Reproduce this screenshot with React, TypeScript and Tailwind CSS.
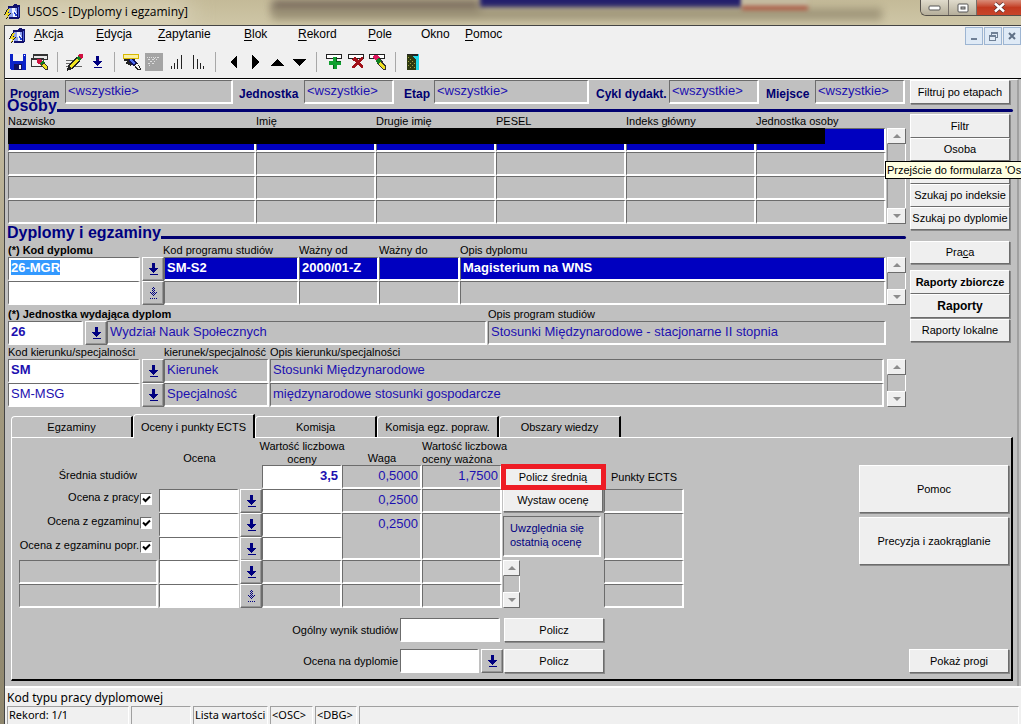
import React, { useEffect, useRef } from "react";

/* ---------- basic controls ---------- */

const sunken = "border-t border-l border-t-[#6c6c6c] border-l-[#6c6c6c] border-r-2 border-b-2 border-r-white border-b-white";
const raised = "border border-t-white border-l-white border-r-[#6c6c6c] border-b-[#6c6c6c]";

type FieldProps = {
  label: string;
  value?: string;
  className?: string;
  tone?: "grey" | "white" | "active";
  bold?: boolean;
  right?: boolean;
  id?: string;
};

function Field({ label, value = "", className = "", tone = "grey", bold, right, id }: FieldProps) {
  const tones = {
    grey: "bg-[#c0c0c0] text-[#1c10b0]",
    white: "bg-white text-[#1c10b0]",
    active: "bg-[#0000c0] text-white",
  };
  return (
    <input
      id={id}
      aria-label={id ? undefined : label}
      defaultValue={value}
      readOnly={tone !== "white"}
      className={`block h-6 min-w-0 rounded-none px-0.5 pb-0.5 text-[13px] outline-none ${sunken} ${tones[tone]} ${bold ? "font-bold" : ""} ${right ? "text-right" : ""} ${className}`}
    />
  );
}

function Btn({ children, className = "" }: { children: React.ReactNode; className?: string }) {
  return (
    <button className={`shrink-0 bg-[#efefef] text-center whitespace-nowrap shadow-[1px_1px_0_#8a8a8a] ${raised} ${className}`}>
      {children}
    </button>
  );
}

function Lov({ disabled, label }: { disabled?: boolean; label: string }) {
  return (
    <button
      aria-label={label}
      className="flex h-6 w-[22px] shrink-0 items-center justify-center border border-t-white border-l-white border-r-[#6c6c6c] border-b-[#6c6c6c] bg-[#c0c0c0] shadow-[inset_-1px_-1px_0_#969696]"
    >
      <svg width="9" height="13" viewBox="0 0 9 13" shapeRendering="crispEdges">
        <defs>
          <pattern id="dither" width="2" height="2" patternUnits="userSpaceOnUse">
            <rect width="1" height="1" fill="#000080" />
            <rect x="1" y="1" width="1" height="1" fill="#000080" />
          </pattern>
        </defs>
        <path d="M3 0h3v5h3v1h-1v1h-1v1h-1v1h-1v1h-1v-1h-1v-1h-1v-1h-1v-1h-1v-1h3zM1 11h8v1h-8z" fill={disabled ? "url(#dither)" : "#000080"} />
      </svg>
    </button>
  );
}

function Scroll({ className = "" }: { className?: string }) {
  const cap = "flex h-4 items-center justify-center bg-[#efefef] border border-t-white border-l-white border-r-[#6c6c6c] border-b-[#6c6c6c]";
  return (
    <div className={`flex shrink-0 flex-col ${className}`}>
      <button aria-label="W górę" className={cap}>
        <svg width="8" height="4" viewBox="0 0 8 4"><path d="M4 0l4 4H0z" fill="#8c8c8c" /></svg>
      </button>
      <div className="flex-1 border-x border-l-[#8a8a8a] border-r-white" />
      <button aria-label="W dół" className={cap}>
        <svg width="8" height="4" viewBox="0 0 8 4"><path d="M0 0h8l-4 4z" fill="#8c8c8c" /></svg>
      </button>
    </div>
  );
}

function Heading({ children, className = "" }: { children: string; className?: string }) {
  return (
    <div className={`flex items-end ${className}`}>
      <h2 className="text-[16px] leading-4 font-bold text-[#000080]">{children}</h2>
      <div className="mb-0.5 h-[3px] flex-1 rounded-r-full bg-[#000070]" />
    </div>
  );
}

/* ---------- icons ---------- */

function AppIcon() {
  return (
    <svg width="17" height="16" viewBox="0 0 17 16" shapeRendering="crispEdges">
      <path d="M4 2h4l2-2h3v1h3v13l-2 1H5z" fill="#10106c" />
      <path d="M5 4h8v9H5z" fill="#8fa4f0" />
      <path d="M8 4h3v3h1v2h1v4H9V9H8z" fill="#f0f4ff" />
      <path d="M10 8h1v1h1v1h1v2h-2v-2h-1z" fill="#2040d0" />
      <path d="M14 3h1v10h-1z" fill="#4a60d8" />
      <path d="M3 5h3L4 9h3l-5 7 1-5H0z" fill="#f0d820" />
      <path d="M3 5h1L1 11H0zM6 9h1l-5 7v-1z" fill="#202020" />
    </svg>
  );
}

function Icon({ w, h, children }: { w: number; h: number; children: React.ReactNode }) {
  return (
    <svg width={w} height={h} viewBox={`0 0 ${w} ${h}`} shapeRendering="crispEdges">
      {children}
    </svg>
  );
}

const tools: (null | [string, React.ReactNode])[] = [
  ["Zapisz", (
    <Icon w={16} h={16}>
      <path d="M0 0h15l1 1v15H1l-1-1z" fill="#0a22c8" />
      <path d="M3 0h10v7H3z" fill="#f4f4f4" />
      <path d="M4 10h8v6H4z" fill="#101060" />
      <path d="M9 11h2v4H9z" fill="#f4f4f4" />
      <path d="M14 1h1v1h-1z" fill="#fff" />
    </Icon>
  )],
  ["Wyczyść", (
    <Icon w={18} h={16}>
      <path d="M2 0h15v6H2z" fill="#333" />
      <path d="M3 2h13v3H3z" fill="#e8e8e8" />
      <path d="M0 4h13v9H0z" fill="#333" />
      <path d="M1 6h11v6H1z" fill="#f4f4f4" />
      <path d="M6 5h4l2 3-2 3-3-1-1-2z" fill="#d01040" />
      <path d="M10 8l2-1 2 2-3 3-2-2z" fill="#108020" />
      <path d="M13 8l4 5v3h-3l-4-5z" fill="#333" />
      <path d="M13 9l3 4v2h-2l-3-4z" fill="#f0e020" />
    </Icon>
  )],
  null,
  ["Edytuj", (
    <Icon w={18} h={17}>
      <path d="M0 6h8v1H0zM0 9h6v1H0zM0 12h16v1H0z" fill="#666" />
      <path d="M2 11l8-8 4 4-8 8-5 2z" fill="#222" />
      <path d="M4 11l7-7 2 2-8 8z" fill="#f4e820" />
      <path d="M10 4l2-2 3 3-2 2z" fill="#108020" />
      <path d="M12 1l2-1h2l1 1v2l-2 2-3-3z" fill="#d01040" />
    </Icon>
  )],
  ["Lista", (
    <Icon w={9} h={12}>
      <path d="M3 0h3v5h3v1h-1v1h-1v1h-1v1h-1v1h-1v-1h-1v-1h-1v-1h-1v-1h-1v-1h3zM1 11h8v1h-8z" fill="#000080" />
    </Icon>
  )],
  null,
  ["Wprowadź zapytanie", (
    <Icon w={18} h={16}>
      <path d="M0 0h16v5H0z" fill="#d8b800" />
      <path d="M1 1h14v3H1z" fill="#faf0a0" />
      <path d="M1 5h11v2H9l-3 2 3 1-1 2-6-3 3-2H1z" fill="#222" />
      <path d="M6 5h4l4 4-3 4-5-5z" fill="#101060" />
      <path d="M7 5h2l3 4-1 2-4-4z" fill="#5070f0" />
      <path d="M11 11l3-3 4 7-1 1h-3z" fill="#222" />
      <path d="M12 11l2-2 3 6h-2z" fill="#f4f4f4" />
    </Icon>
  )],
  ["Anuluj zapytanie", (
    <Icon w={18} h={18}>
      <path d="M0 0h18v18H0z" fill="#a4a4a4" />
      <path d="M2 4h1v1H2zM4 4h1v1H4zM6 4h1v1H6zM8 4h1v1H8zM10 4h1v1h-1zM12 4h2v1h-2zM3 6h2v1H3zM5 8h2v1H5zM7 6h2v1H7zM9 5h1v1H9zM9 8h1v1H9zM7 10h2v1H7zM11 6h1v1h-1zM3 10h2v1H3zM4 12h1v1H4z" fill="#e0e0e0" />
    </Icon>
  )],
  ["Sortuj rosnąco", (
    <Icon w={11} h={14}>
      <path d="M0 11h1v3H0zM3 8h1v6H3zM6 4h1v10H6zM10 0h1v14h-1z" fill="#222" />
    </Icon>
  )],
  ["Sortuj malejąco", (
    <Icon w={11} h={14}>
      <path d="M0 0h1v14H0zM4 4h1v10H4zM7 8h1v6H7zM10 11h1v3h-1z" fill="#222" />
    </Icon>
  )],
  null,
  ["Poprzedni", <Icon w={7} h={14}><path d="M7 0v14L0 7z" fill="#000" /></Icon>],
  ["Następny", <Icon w={7} h={14}><path d="M0 0v14l7-7z" fill="#000" /></Icon>],
  ["W górę", <Icon w={14} h={7}><path d="M7 0l7 7H0z" fill="#000" /></Icon>],
  ["W dół", <Icon w={14} h={7}><path d="M0 0h14L7 7z" fill="#000" /></Icon>],
  null,
  ["Wstaw rekord", (
    <Icon w={17} h={16}>
      <path d="M0 0h16v5H0z" fill="#222" />
      <path d="M1 1h14v3H1z" fill="#fff" />
      <path d="M7 3h4v4h4v4h-4v4H7v-4H3V7h4z" fill="#10a030" />
      <path d="M10 3h1v4h4v1h-5zM7 11h1v4H7z" fill="#086018" />
    </Icon>
  )],
  ["Usuń rekord", (
    <Icon w={17} h={16}>
      <path d="M0 0h16v5H0z" fill="#222" />
      <path d="M1 1h14v3H1z" fill="#fff" />
      <path d="M4 5l2-2h1l3 3 3-3h2v2l-3 3 3 4v2h-2l-3-3-4 3H4v-2l4-4-4-2z" fill="#a01018" />
    </Icon>
  )],
  ["Wyczyść rekord", (
    <Icon w={18} h={16}>
      <path d="M0 0h16v5H0z" fill="#222" />
      <path d="M1 1h14v3H1z" fill="#fff" />
      <path d="M10 5h2l5 7v4h-3L8 9z" fill="#333" />
      <path d="M11 7l5 6v2h-2l-5-6z" fill="#f0e020" />
      <path d="M5 1h4l2 3-4 3-3-3z" fill="#e01860" />
      <path d="M10 4l2 3-3 3-3-3z" fill="#108020" />
    </Icon>
  )],
  null,
  ["Wyjście", (
    <Icon w={12} h={16}>
      <path d="M0 0h12v16H0z" fill="#20d8e8" />
      <path d="M0 0h11v2H0z" fill="#222" />
      <path d="M0 1h4l5 4v11H0z" fill="#2f3a10" />
      <path d="M1 3h1v1H1zM3 5h1v1H3zM5 7h1v1H5zM1 7h1v1H1zM3 9h1v1H3zM5 11h1v1H5zM1 11h1v1H1zM3 13h1v1H3zM7 9h1v1H7zM7 13h1v1H7z" fill="#a0a040" />
    </Icon>
  )],
];

/* ---------- window chrome ---------- */

function TitleBar() {
  return (
    <header className="relative flex h-[25px] items-start overflow-hidden bg-linear-to-b from-[#c4ba98] to-[#cec6a6]">
      <div className="absolute inset-y-0 left-0 w-[190px] bg-[#e6e0cc] opacity-60 blur-md" />
      <div className="absolute top-0 left-[272px] h-3 w-[208px] bg-[#77695c] blur-xs" />
      <div className="absolute -top-2 left-[480px] h-4 w-[262px] bg-[#201c6c] blur-[2px]" />
      <div className="absolute top-2 left-[272px] h-3 w-[610px] bg-[#958b70] opacity-80 blur-xs" />
      <div className="absolute -top-2 left-[742px] h-[18px] w-[66px] border-b-4 border-[#a8503c] bg-[#c4baa0] blur-[2px]" />
      <div className="relative flex h-full items-center gap-1.5 pb-0.5 pl-1">
        <AppIcon />
        <h1 className="font-['Open_Sans',sans-serif] text-[12px] text-black">USOS - [Dyplomy i egzaminy]</h1>
      </div>
      <div className="relative ml-auto flex h-4 overflow-hidden rounded-bl-md border border-t-0 border-r-0 border-[#55504a]">
        <button aria-label="Minimalizuj" className="flex w-7 items-center justify-center border-r border-[#77706a] bg-linear-to-b from-[#e0dbcc] to-[#b5ae9a]">
          <svg width="13" height="6" viewBox="0 0 13 6"><rect x="1" y="1" width="11" height="4" rx="1" fill="#fff" stroke="#555" /></svg>
        </button>
        <button aria-label="Maksymalizuj" className="flex w-7 items-center justify-center border-r border-[#77706a] bg-linear-to-b from-[#e0dbcc] to-[#b5ae9a]">
          <svg width="12" height="10" viewBox="0 0 12 10"><rect x="1" y="1" width="10" height="8" rx="1" fill="#fff" stroke="#555" /><rect x="4" y="4" width="4" height="2" fill="#bbb" stroke="#555" /></svg>
        </button>
        <button aria-label="Zamknij" className="flex w-11 items-center justify-center bg-linear-to-b from-[#d98c78] via-[#c23a20] to-[#c8452a]">
          <svg width="13" height="11" viewBox="0 0 13 11"><path d="M2 1.500l9 8M11 1.500l-9 8" stroke="#5a3030" strokeWidth="4" /><path d="M2 1.500l9 8M11 1.500l-9 8" stroke="#fff" strokeWidth="2.500" /></svg>
        </button>
      </div>
    </header>
  );
}

const menu: [string, string, string][] = [
  ["A", "kcja", "w-[62px]"],
  ["E", "dycja", "w-[62px]"],
  ["Z", "apytanie", "w-[86px]"],
  ["B", "lok", "w-[54px]"],
  ["R", "ekord", "w-[70px]"],
  ["P", "ole", "w-[53px]"],
  ["", "Okno", "w-11"],
  ["P", "omoc", "w-14"],
];

function MenuBar() {
  const mdi = "flex h-[18px] w-[18px] items-center justify-center border border-[#9db5d2] bg-[#dfeaf6]";
  return (
    <nav className="flex h-[21px] items-start bg-[#f0f0f0] pl-1">
      <div className="w-[25px] pt-0.5"><AppIcon /></div>
      {menu.map(([key, rest, w]) => (
        <button key={key + rest} className={`${w} shrink-0 text-left text-[12px] leading-4`}>
          <span className="underline underline-offset-2">{key}</span>{rest}
        </button>
      ))}
      <div className="ml-auto flex gap-px pt-px">
        <button aria-label="Minimalizuj okno" className={mdi}><Icon w={8} h={8}><path d="M1 6h6v2H1z" fill="#6f8096" /></Icon></button>
        <button aria-label="Przywróć okno" className={mdi}><Icon w={9} h={9}><path d="M2 0h7v6H7V5h1V2H3v1H2zM0 3h7v6H0zM1 5v3h5V5z" fill="#6f8096" fillRule="evenodd" /></Icon></button>
        <button aria-label="Zamknij okno" className={mdi}><svg width="8" height="8" viewBox="0 0 8 8"><path d="M1 1l6 6M7 1L1 7" stroke="#5f7086" strokeWidth="2" /></svg></button>
      </div>
    </nav>
  );
}

function ToolBar() {
  return (
    <div role="toolbar" className="flex h-8 items-center border-b border-black bg-[#f0f0f0] pb-px pl-0.5">
      {tools.map((t, i) =>
        t ? (
          <button key={i} aria-label={t[0]} className="flex h-6 w-[22px] shrink-0 items-center justify-center">{t[1]}</button>
        ) : (
          <div key={i} className="mx-1.5 h-5 w-px bg-[#a8a8a8]" />
        ),
      )}
    </div>
  );
}

/* ---------- sections ---------- */

function FilterRow() {
  const item = "flex items-center";
  const lab = "pt-1 text-[12px] leading-4 font-bold text-[#000070] whitespace-nowrap";
  const all = "<wszystkie>";
  return (
    <div className="flex h-6 items-center pl-[5px]">
      <div className={item}><label htmlFor="prog" className={`w-[55px] ${lab}`}>Program</label><Field id="prog" label="Program" value={all} className="w-[168px]" /></div>
      <div className={`ml-1.5 ${item}`}><label htmlFor="jedn" className={`w-[65px] ${lab}`}>Jednostka</label><Field id="jedn" label="Jednostka" value={all} className="w-[90px]" /></div>
      <div className={`ml-2.5 ${item}`}><label htmlFor="etap" className={`w-[30px] ${lab}`}>Etap</label><Field id="etap" label="Etap" value={all} className="w-[155px]" /></div>
      <div className={`ml-[7px] ${item}`}><label htmlFor="cykl" className={`w-[73px] ${lab}`}>Cykl dydakt.</label><Field id="cykl" label="Cykl" value={all} className="w-[90px]" /></div>
      <div className={`ml-[7px] ${item}`}><label htmlFor="miej" className={`w-[49px] ${lab}`}>Miejsce</label><Field id="miej" label="Miejsce" value={all} className="w-[90px]" /></div>
      <Btn className="mr-[7px] ml-auto h-6 w-[100px]">Filtruj po etapach</Btn>
    </div>
  );
}

function People() {
  const heads = ["Nazwisko", "Imię", "Drugie imię", "PESEL", "Indeks główny", "Jednostka osoby"];
  return (
    <div className="flex items-end">
      <div className="relative flex-1">
        <table className="w-full table-fixed border-separate border-spacing-0">
          <colgroup>
            <col className="w-[248px]" /><col className="w-[120px]" /><col className="w-[120px]" />
            <col className="w-[130px]" /><col className="w-[130px]" /><col />
          </colgroup>
          <thead>
            <tr>{heads.map((h) => <th key={h} className="p-0 text-left leading-[14px] font-normal">{h}</th>)}</tr>
          </thead>
          <tbody>
            {[0, 1, 2, 3].map((r) => (
              <tr key={r}>
                {heads.map((h) => <td key={h} className={`h-6 p-0 ${sunken} ${r === 0 ? "bg-[#0000c0]" : ""}`} />)}
              </tr>
            ))}
          </tbody>
        </table>
        <div className="absolute top-3.5 left-0 h-4 w-[93%] bg-black" />
      </div>
      <Scroll className="ml-px h-24 w-[19px]" />
    </div>
  );
}

function Diplomas() {
  const code = useRef<HTMLInputElement>(null);
  useEffect(() => {
    code.current?.focus();
    code.current?.select();
  }, []);
  const lab = "leading-[14px] whitespace-nowrap";
  return (
    <>
      <div className="mt-0.5 flex">
        <label htmlFor="kod" className={`w-[155px] font-bold ${lab}`}>(*) Kod dyplomu</label>
        <span className={`w-[136px] ${lab}`}>Kod programu studiów</span>
        <span className={`w-20 ${lab}`}>Ważny od</span>
        <span className={`w-[81px] ${lab}`}>Ważny do</span>
        <span className={lab}>Opis dyplomu</span>
      </div>
      <div className="flex">
        <div className="flex-1">
          <div className="flex">
            <input
              id="kod"
              ref={code}
              defaultValue="26-MGR"
              className={`mr-0.5 block h-6 w-[132px] rounded-none bg-white px-0.5 pb-0.5 text-[13px] font-bold text-[#1c10b0] outline-none selection:bg-[#3399ff] selection:text-white ${sunken}`}
            />
            <Lov label="Lista kodów dyplomu" />
            <Field label="Kod programu studiów" tone="active" bold value="SM-S2" className="w-[135px]" />
            <Field label="Ważny od" tone="active" bold value="2000/01-Z" className="w-20" />
            <Field label="Ważny do" tone="active" className="w-[81px]" />
            <Field label="Opis dyplomu" tone="active" bold value="Magisterium na WNS" className="flex-1" />
          </div>
          <div className="flex">
            <Field label="Kod dyplomu 2" tone="white" className="mr-0.5 w-[132px]" />
            <Lov disabled label="Lista kodów dyplomu 2" />
            <Field label="Kod programu 2" className="w-[135px]" />
            <Field label="Ważny od 2" className="w-20" />
            <Field label="Ważny do 2" className="w-[81px]" />
            <Field label="Opis dyplomu 2" className="flex-1" />
          </div>
        </div>
        <Scroll className="ml-px h-12 w-[19px]" />
      </div>

      <div className="mt-0.5 flex">
        <label htmlFor="jw" className={`w-[480px] font-bold ${lab}`}>(*) Jednostka wydająca dyplom</label>
        <label htmlFor="ops" className={lab}>Opis program studiów</label>
      </div>
      <div className="mr-5 flex">
        <Field id="jw" label="Jednostka" tone="white" bold value="26" className="mr-0.5 w-[75px]" />
        <Lov label="Lista jednostek" />
        <Field label="Nazwa jednostki" value="Wydział Nauk Społecznych" className="mr-px w-[380px]" />
        <Field id="ops" label="Opis programu" value="Stosunki Międzynarodowe - stacjonarne II stopnia" className="flex-1" />
      </div>

      <div className="flex">
        <label htmlFor="kk" className={`w-[156px] ${lab}`}>Kod kierunku/specjalności</label>
        <span className={`w-[106px] ${lab}`}>kierunek/specjalność</span>
        <span className={lab}>Opis kierunku/specjalności</span>
      </div>
      <div className="flex">
        <div className="mr-[3px] flex-1">
          <div className="flex">
            <Field id="kk" label="Kod kierunku" tone="white" bold value="SM" className="mr-0.5 w-[132px]" />
            <Lov label="Lista kierunków" />
            <Field label="Typ" value="Kierunek" className="mr-px w-[105px]" />
            <Field label="Opis kierunku" value="Stosunki Międzynarodowe" className="flex-1" />
          </div>
          <div className="flex">
            <Field label="Kod specjalności" tone="white" value="SM-MSG" className="mr-0.5 w-[132px]" />
            <Lov label="Lista specjalności" />
            <Field label="Typ 2" value="Specjalność" className="mr-px w-[105px]" />
            <Field label="Opis specjalności" value="międzynarodowe stosunki gospodarcze" className="flex-1" />
          </div>
        </div>
        <Scroll className="h-12 w-[19px]" />
      </div>
    </>
  );
}

function SideButtons() {
  return (
    <aside className="ml-1 flex w-[100px] shrink-0 flex-col">
      <Btn className="h-6">Filtr</Btn>
      <div className="relative flex flex-col">
        <Btn className="h-[23px]">Osoba</Btn>
        <div role="tooltip" className="absolute top-[23px] -left-[25px] z-10 h-[18px] border border-black bg-[#ffffe1] px-px leading-4 whitespace-nowrap">
          Przejście do formularza 'Osoby'
        </div>
      </div>
      <Btn className="h-[23px]">{""}</Btn>
      <Btn className="h-[23px]">Szukaj po indeksie</Btn>
      <Btn className="h-[23px]">Szukaj po dyplomie</Btn>
      <Btn className="mt-[11px] h-[23px]">Pra<u>c</u>a</Btn>
      <Btn className="mt-1.5 h-6 font-bold">Raporty zbiorcze</Btn>
      <Btn className="h-6 text-[12px] font-bold">Raporty</Btn>
      <Btn className="mt-px h-[23px]">Raporty lokalne</Btn>
    </aside>
  );
}

const tabs: [string, boolean][] = [
  ["Egzaminy", false],
  ["Oceny i punkty ECTS", true],
  ["Komisja", false],
  ["Komisja egz. popraw.", false],
  ["Obszary wiedzy", false],
];

function Check({ label }: { label: string }) {
  return (
    <label className="flex items-start justify-end gap-px pr-[7px] leading-4">
      {label}
      <span className="relative mt-1 block h-3 w-3">
        <input type="checkbox" defaultChecked className="block h-3 w-3 appearance-none border border-t-[#6c6c6c] border-l-[#6c6c6c] border-r-white border-b-white bg-white" />
        <svg className="pointer-events-none absolute top-0.5 left-0.5" width="9" height="8" viewBox="0 0 9 8"><path d="M1 3.500l2.500 2.500L8 1.500" fill="none" stroke="#000" strokeWidth="2" /></svg>
      </span>
    </label>
  );
}

function Grades() {
  const rows = ["pracy", "egzaminu", "egzaminu popr.", "dodatkowa 1", "dodatkowa 2"];
  const at = ["row-start-3", "row-start-4", "row-start-5", "row-start-6", "row-start-7"];
  return (
    <div className="grid w-[665px] grid-cols-[140px_81px_22px_80px_80px_81px_101px_80px] grid-rows-[27px_24px_24px_24px_23px_24px_24px]">
      <div className="col-start-2 pt-3.5 text-center leading-[13px]">Ocena</div>
      <div className="col-start-4 flex justify-center text-center leading-[13px] whitespace-nowrap"><span className="pt-0.5">Wartość liczbowa<br />oceny</span></div>
      <div className="col-start-5 pt-3.5 text-center leading-[13px]">Waga</div>
      <div className="col-start-6 pt-0.5 leading-[13px] whitespace-nowrap">Wartość liczbowa<br />oceny ważona</div>

      <label htmlFor="sr" className="col-start-1 row-start-2 pr-[22px] text-right leading-5">Średnia studiów</label>
      <Field id="sr" label="Średnia" tone="white" bold right value="3,5" className="col-start-4 row-start-2 w-full" />
      <Field label="Waga średniej" right value="0,5000" className="col-start-5 row-start-2 w-full" />
      <Field label="Średnia ważona" right value="1,7500" className="col-start-6 row-start-2 w-20" />

      <div className="col-start-1 row-start-3 grid"><Check label="Ocena z pracy" /></div>
      <div className="col-start-1 row-start-4 grid"><Check label="Ocena z egzaminu" /></div>
      <div className="col-start-1 row-start-5 grid"><Check label="Ocena z egzaminu popr." /></div>
      <Field label="Ocena dodatkowa 1" className="col-start-1 row-start-6 w-[139px]" />
      <Field label="Ocena dodatkowa 2" className="col-start-1 row-start-7 w-[139px]" />

      {rows.map((r, i) => (
        <React.Fragment key={r}>
          <Field label={`Ocena: ${r}`} tone="white" className={`col-start-2 w-20 ${at[i]}`} />
          <div className={`col-start-3 ${at[i]}`}><Lov disabled={i === 4} label={`Lista ocen: ${r}`} /></div>
          <Field label={`Wartość: ${r}`} tone={i < 3 ? "white" : "grey"} className={`col-start-4 w-full ${at[i]}`} />
        </React.Fragment>
      ))}

      <Field label="Waga pracy" right value="0,2500" className="col-start-5 row-start-3 w-full" />
      <output aria-label="Waga egzaminu" className={`col-start-5 row-span-2 row-start-4 px-0.5 pt-0.5 text-right text-[13px] leading-4 text-[#1c10b0] ${sunken}`}>0,2500</output>
      <Field label="Waga 1" className="col-start-5 row-start-6 w-full" />
      <Field label="Waga 2" className="col-start-5 row-start-7 w-full" />

      <Field label="Praca ważona" className="col-start-6 row-start-3 w-20" />
      <output aria-label="Egzamin ważony" className={`col-start-6 row-span-2 row-start-4 w-20 ${sunken}`} />
      <Field label="Ważona 1" className="col-start-6 row-start-6 w-20" />
      <Field label="Ważona 2" className="col-start-6 row-start-7 w-20" />

      <div className="relative col-start-7 row-start-2 flex">
        <Btn className="h-6 w-[100px]">Policz średnią</Btn>
        <div className="pointer-events-none absolute -inset-x-0.5 -top-px -bottom-px z-10 border-5 border-[#ee1c25]" />
      </div>
      <Btn className="col-start-7 row-start-3 h-[23px] w-[100px]">Wystaw ocenę</Btn>
      <div className={`col-start-7 row-span-2 row-start-4 mt-[3px] h-[41px] w-[98px] px-1.5 pt-1 leading-[14px] text-[#000080] ${sunken}`}>Uwzględnia się ostatnią ocenę</div>
      <Scroll className="col-start-7 row-span-2 row-start-6 h-12 w-[17px]" />

      <div className="col-start-8 row-start-2 text-center leading-6">Punkty ECTS</div>
      <Field label="ECTS pracy" className="col-start-8 row-start-3 w-full" />
      <output aria-label="ECTS egzaminu" className={`col-start-8 row-span-2 row-start-4 ${sunken}`} />
      <Field label="ECTS 1" className="col-start-8 row-start-6 w-full" />
      <Field label="ECTS 2" className="col-start-8 row-start-7 w-full" />
    </div>
  );
}

function TabPanel() {
  return (
    <section className="mt-[7px] mr-1 ml-1.5 flex flex-1 flex-col">
      <div role="tablist" className="flex h-6 items-end">
        {tabs.map(([name, active]) => (
          <button
            key={name}
            role="tab"
            aria-selected={active}
            className={`w-[122px] shrink-0 rounded-tl-sm border-t border-r-2 border-l border-t-white border-r-black border-l-white bg-[#c0c0c0] text-center ${active ? "z-10 h-6 pt-px" : "h-[22px]"}`}
          >
            {name}
          </button>
        ))}
      </div>
      <div className="-mt-px flex flex-1 justify-between border-t border-r-2 border-b-2 border-l border-t-white border-r-black border-b-black border-l-white pr-0.5 pb-1.5 pl-[7px]">
        <div>
          <Grades />
          <div className="mt-2.5 flex items-center">
            <label htmlFor="ow" className="w-[381px] pr-0.5 text-right">Ogólny wynik studiów</label>
            <Field id="ow" label="Wynik" tone="white" className="mr-1 w-[100px]" />
            <Btn className="h-6 w-[100px]">Policz</Btn>
          </div>
          <div className="mt-[7px] flex items-center">
            <label htmlFor="od" className="w-[381px] pr-0.5 text-right">Ocena na dyplomie</label>
            <Field id="od" label="Ocena" tone="white" className="mr-0.5 w-[79px]" />
            <Lov label="Lista ocen na dyplomie" />
            <Btn className="ml-px h-6 w-[100px]">Policz</Btn>
          </div>
        </div>
        <div className="flex flex-col items-end gap-1 pt-[27px]">
          <Btn className="h-12 w-[150px]">Pomoc</Btn>
          <Btn className="h-12 w-[150px]">Precyzja i zaokrąglanie</Btn>
          <Btn className="mt-auto h-6 w-[100px]">Pokaż progi</Btn>
        </div>
      </div>
    </section>
  );
}

function StatusBar() {
  const cell = "h-[18px] shrink-0 border-t border-l border-[#a0a0a0] border-r border-r-white pl-px leading-4 whitespace-nowrap";
  return (
    <footer className="border-t-2 border-white bg-[#f0f0f0] pl-0.5 font-['Noto_Sans',sans-serif] text-[11px]">
      <p className="pt-0.5 text-[12px] leading-4">Kod typu pracy dyplomowej</p>
      <div className="flex gap-0.5">
        <div className={`w-[122px] ${cell}`}>Rekord: 1/1</div>
        <div className={`w-[60px] ${cell}`} />
        <div className={`w-[75px] ${cell}`}>Lista wartości</div>
        <div className={`w-[43px] ${cell}`}>&lt;OSC&gt;</div>
        <div className={`w-[42px] ${cell}`}>&lt;DBG&gt;</div>
        <div className={`mr-0.5 flex-1 ${cell}`} />
      </div>
    </footer>
  );
}

export default function App() {
  return (
    <div className="flex min-h-screen flex-col overflow-hidden bg-[#c9c1a2] font-['Liberation_Sans',Arial,sans-serif] text-[11px] text-black">
      <TitleBar />
      <div className="flex flex-1">
        <div className="w-1 shrink-0 bg-linear-to-b from-[#cfc7aa] via-[#a39a80] to-[#8f876e]" />
        <div className="flex min-w-0 flex-1 flex-col border-t border-l border-[#444]">
          <MenuBar />
          <ToolBar />
          <div className="flex flex-1 flex-col bg-[#c0c0c0] pr-0.5">
            <main className="flex flex-1 flex-col border-t border-r-2 border-t-white border-r-[#a0a0a0] pb-[5px]">
              <FilterRow />
              <Heading className="-mt-1.5 ml-0.5 mr-1">Osoby</Heading>
              <div className="mr-[7px] ml-[3px] flex">
                <div className="min-w-0 flex-1">
                  <People />
                  <Heading className="mt-px -ml-px">Dyplomy i egzaminy</Heading>
                  <Diplomas />
                </div>
                <SideButtons />
              </div>
              <TabPanel />
            </main>
          </div>
          <StatusBar />
        </div>
      </div>
    </div>
  );
}
